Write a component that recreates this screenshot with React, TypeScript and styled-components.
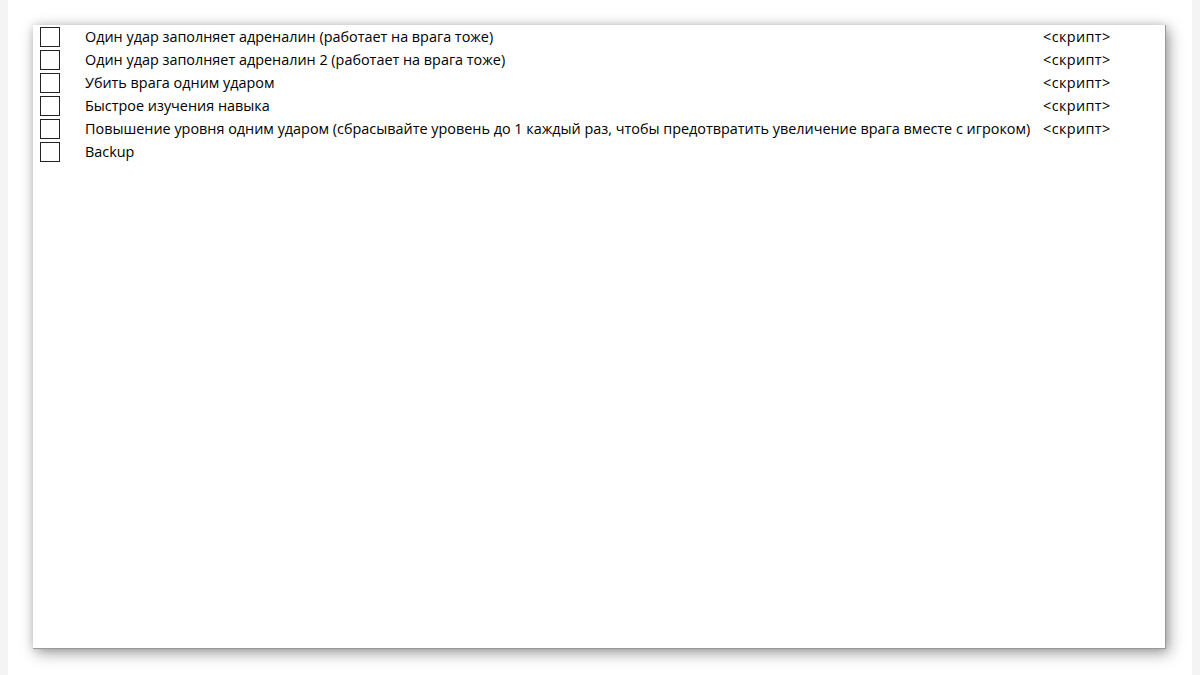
import React from 'react';
import styled, { createGlobalStyle } from 'styled-components';

const GlobalStyle = createGlobalStyle`
    html, body {
        margin: 0;
        padding: 0;
        background: #f4f4f4;
    }
    #root {
        height: 675px;
    }
`;

interface Entry {
    label: string;
    value?: string;
}

const entries: Entry[] = [
    { label: 'Один удар заполняет адреналин (работает на врага тоже)', value: '<скрипт>' },
    { label: 'Один удар заполняет адреналин 2 (работает на врага тоже)', value: '<скрипт>' },
    { label: 'Убить врага одним ударом', value: '<скрипт>' },
    { label: 'Быстрое изучения навыка', value: '<скрипт>' },
    { label: 'Повышение уровня одним ударом (сбрасывайте уровень до 1 каждый раз, чтобы предотвратить увеличение врага вместе с игроком)', value: '<скрипт>' },
    { label: 'Backup' },
];

export default function App() {
    return (
        <>
            <GlobalStyle />
            <Page>
                <Panel>
                    {entries.map((e, i) => (
                        <Row key={i}>
                            <Box />
                            <Label>{e.label}</Label>
                            <Value>{e.value}</Value>
                        </Row>
                    ))}
                </Panel>
            </Page>
        </>
    );
}

const Page = styled.div`
    box-sizing: border-box;
    height: 675px;
    margin: 0 8px;
    background: #fff;
    padding: 25px 26px 26px 25px;
    display: flex;
`;

const Panel = styled.div`
    flex: 1;
    background: #fff;
    border-right: 1px solid #9a9a9a;
    border-bottom: 1px solid #9a9a9a;
    box-shadow: 3px 4px 14px rgba(0, 0, 0, 0.38), 0 0 8px rgba(0, 0, 0, 0.12);
    padding: 0 0 0 7px;
    font-family: "Open Sans", "Noto Sans", sans-serif;
    font-size: 14.4px;
    color: #000;
`;

const Row = styled.div`
    display: grid;
    grid-template-columns: 20px 983px auto;
    align-items: center;
    height: 23px;
`;

const Box = styled.div`
    box-sizing: border-box;
    width: 20px;
    height: 20px;
    border: 1px solid #222;
    background: #fff;
`;

const Label = styled.span`
    padding-left: 25px;
    white-space: nowrap;
`;

const Value = styled.span`
    white-space: nowrap;
    letter-spacing: 0.4px;
`;
